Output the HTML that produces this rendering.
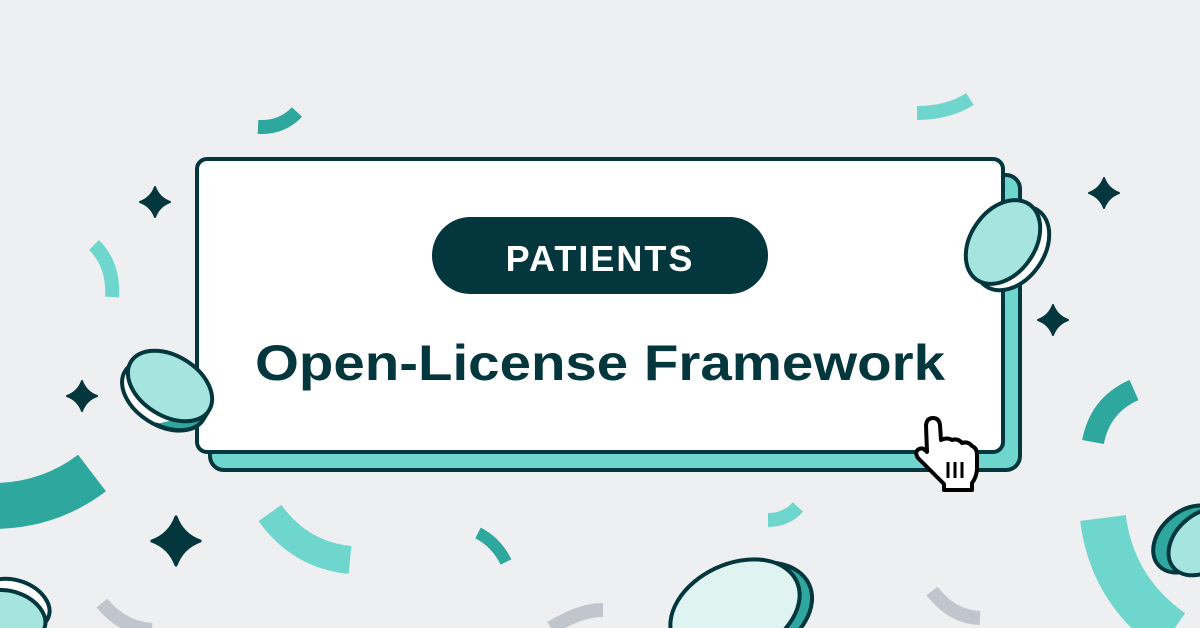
<!DOCTYPE html>
<html><head><meta charset="utf-8"><style>
html,body{margin:0;padding:0;background:#eeeff1;width:1200px;height:628px;overflow:hidden;}
svg{display:block}
</style></head><body>
<svg width="1200" height="628" viewBox="0 0 1200 628" xmlns="http://www.w3.org/2000/svg">
<rect width="1200" height="628" fill="#eeeff1"/>
<defs>
<path id="star" d="M0,-15 Q4,-4 15,0 Q4,4 0,15 Q-4,4 -15,0 Q-4,-4 0,-15Z" fill="#03363d" stroke="#03363d" stroke-width="2" stroke-linejoin="round"/>
</defs>
<g fill="none" stroke-linecap="butt">
<path d="M258,127 Q282,128 297,112" stroke="#2ea89f" stroke-width="14"/>
<path d="M917,113 Q948,113 970,99" stroke="#6fd6cd" stroke-width="14"/>
<path d="M94,245 Q114,265 112,297" stroke="#6fd6cd" stroke-width="14"/>
<path d="M-5,506 Q50,505 92,473" stroke="#2ea89f" stroke-width="46"/>
<path d="M270,513 Q300,555 350,560" stroke="#6fd6cd" stroke-width="28"/>
<path d="M478,533 Q496,542 506,562" stroke="#2ea89f" stroke-width="12"/>
<path d="M768,520 Q786,520 798,507" stroke="#6fd6cd" stroke-width="14"/>
<path d="M102,603 Q122,628 152,630" stroke="#c1c5ce" stroke-width="14"/>
<path d="M551,628 Q580,610 603,610" stroke="#c1c5ce" stroke-width="14"/>
<path d="M932,591 Q952,617 980,618" stroke="#c1c5ce" stroke-width="14"/>
<path d="M1093,442 Q1100,405 1134,390" stroke="#2ea89f" stroke-width="22"/>
<path d="M1103,518 Q1112,590 1172,632" stroke="#6fd6cd" stroke-width="46"/>
</g>
<use href="#star" x="155" y="202"/>
<use href="#star" x="1104" y="193"/>
<use href="#star" x="1053" y="320"/>
<use href="#star" x="82" y="396"/>
<g transform="translate(176,541) scale(1.6)"><use href="#star"/></g>
<rect x="210" y="175" width="810" height="295" rx="14" fill="#6fd6cd" stroke="#03363d" stroke-width="4"/>
<rect x="197" y="159" width="806" height="293" rx="10" fill="#fff" stroke="#03363d" stroke-width="4"/>
<rect x="432" y="217" width="336" height="77" rx="38.5" fill="#03363d"/>
<text x="600" y="271" text-anchor="middle" font-family="Liberation Sans, sans-serif" font-weight="bold" font-size="36" fill="#fff" letter-spacing="2">PATIENTS</text>
<text x="600" y="380" text-anchor="middle" font-family="Liberation Sans, sans-serif" font-weight="bold" font-size="50" fill="#03363d" textLength="690" lengthAdjust="spacingAndGlyphs">Open-License Framework</text>
<g transform="translate(170,386) rotate(32)">
<ellipse cx="0" cy="11" rx="46" ry="30" fill="#fff" stroke="#03363d" stroke-width="4"/>
<path d="M8,40 A46,30 0 0 0 46,11 L46,2" fill="#2ea89f" stroke="#03363d" stroke-width="4"/>
<ellipse cx="0" cy="0" rx="46" ry="30" fill="#a6e5df" stroke="#03363d" stroke-width="4"/>
</g>
<g transform="translate(1003,242) rotate(-55)">
<ellipse cx="0" cy="11" rx="46" ry="32" fill="#fff" stroke="#03363d" stroke-width="4"/>
<ellipse cx="0" cy="0" rx="46" ry="32" fill="#a6e5df" stroke="#03363d" stroke-width="4"/>
</g>
<g transform="translate(735,610) rotate(-25)">
<ellipse cx="10" cy="8" rx="68" ry="46" fill="#2ea89f" stroke="#03363d" stroke-width="4"/>
<ellipse cx="0" cy="0" rx="68" ry="46" fill="#dff3f1" stroke="#03363d" stroke-width="4"/>
</g>
<g transform="translate(12,612) rotate(20)">
<ellipse cx="0" cy="-8" rx="36" ry="24" fill="#fff" stroke="#03363d" stroke-width="4"/>
<ellipse cx="0" cy="4" rx="36" ry="24" fill="#a6e5df" stroke="#03363d" stroke-width="4"/>
</g>
<g transform="translate(1200,540) rotate(-40)">
<ellipse cx="-8" cy="-8" rx="40" ry="28" fill="#2ea89f" stroke="#03363d" stroke-width="4"/>
<ellipse cx="2" cy="4" rx="40" ry="28" fill="#a6e5df" stroke="#03363d" stroke-width="4"/>
</g>
<path d="M927,452 L926,425 Q927,418 933,418 Q939,418 940,425 L941,440 Q947,437 952,440 Q958,438 962,443 Q968,441 972,446 Q977,448 977,455 L977,470 Q976,478 972,483 L972,490 L944,490 L944,484 Q938,478 930,470 L918,458 Q914,452 919,449 Q923,447 927,452Z" fill="#fff" stroke="#000" stroke-width="4" stroke-linejoin="round"/>
<path d="M948,462 V478 M955,462 V478 M962,462 V478" stroke="#000" stroke-width="3"/>
</svg>
</body></html>
